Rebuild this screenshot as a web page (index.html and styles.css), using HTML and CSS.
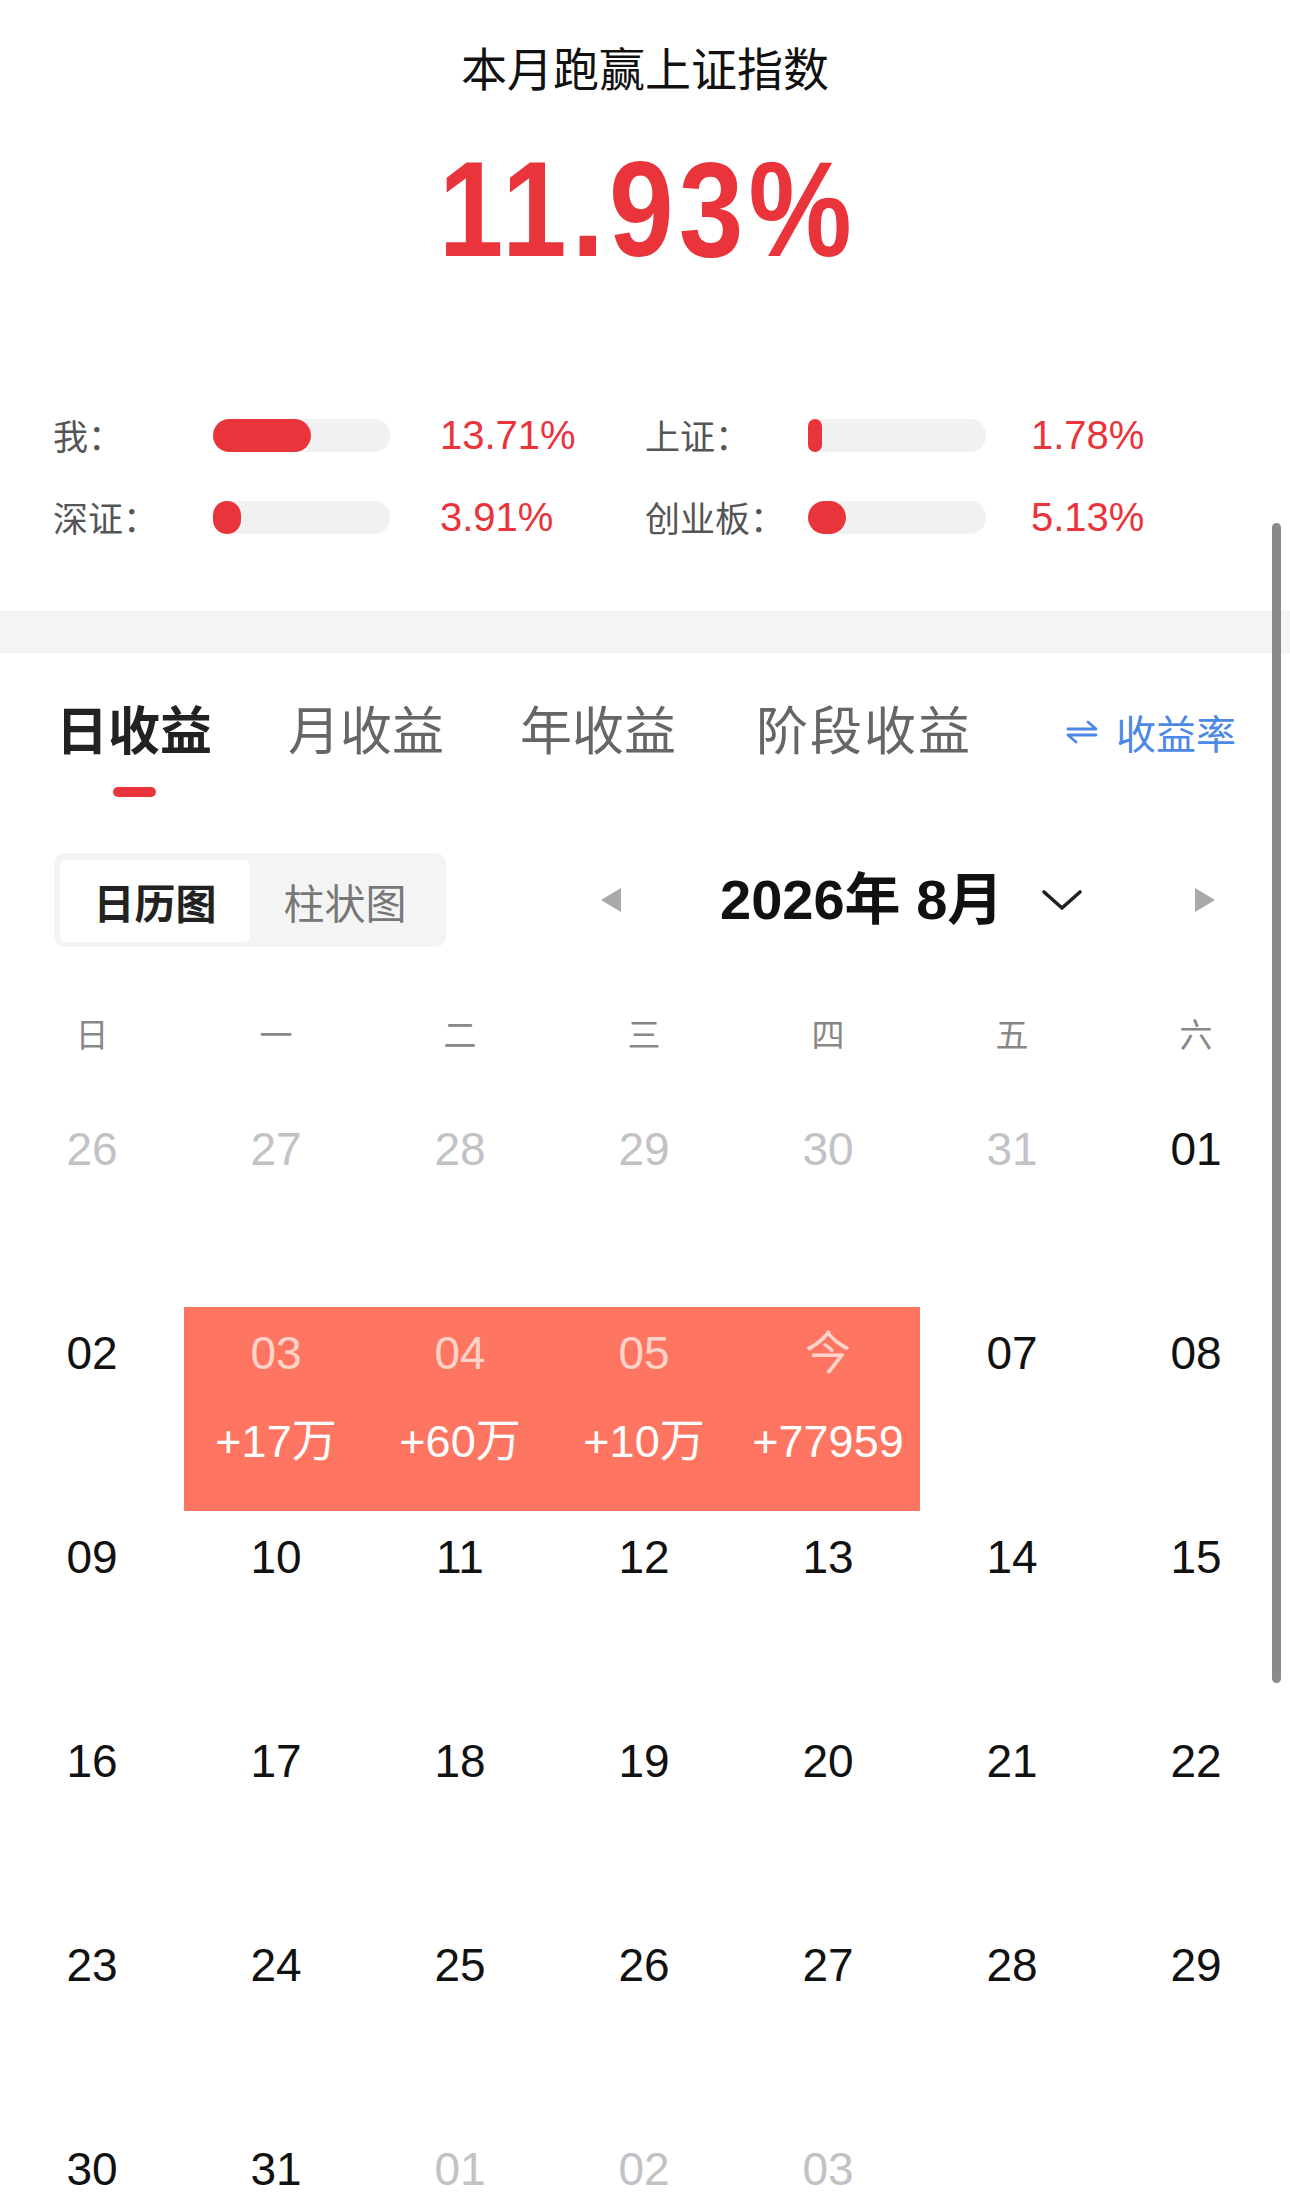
FILE: index.html
```html
<!DOCTYPE html>
<html lang="zh-CN">
<head>
<meta charset="utf-8">
<title>收益日历</title>
<link rel="stylesheet" href="styles.css">
</head>
<body>
<div class="page">
  <section class="summary">
    <h1 class="title">本月跑赢上证指数</h1>
    <div class="big"><span class="big-num">11.93%</span></div>
    <div class="stats">
      <div class="stat-row">
        <span class="label">我：</span>
        <span class="track"><span class="fill" style="width:98px"></span></span>
        <span class="val val-l">13.71%</span>
        <span class="label">上证：</span>
        <span class="track"><span class="fill" style="width:14px"></span></span>
        <span class="val val-r">1.78%</span>
      </div>
      <div class="stat-row">
        <span class="label">深证：</span>
        <span class="track"><span class="fill" style="width:28px"></span></span>
        <span class="val val-l">3.91%</span>
        <span class="label">创业板：</span>
        <span class="track"><span class="fill" style="width:38px"></span></span>
        <span class="val val-r">5.13%</span>
      </div>
    </div>
  </section>
  <div class="band"></div>
  <section class="panel">
    <div class="tabs">
      <div class="tab active"><span class="tab-text">日收益</span><span class="underline"></span></div>
      <div class="tab"><span class="tab-text">月收益</span></div>
      <div class="tab"><span class="tab-text">年收益</span></div>
      <div class="tab tab-wide"><span class="tab-text">阶段收益</span></div>
      <div class="rate">
        <svg class="swap" width="32" height="24" viewBox="0 0 32 24"><path d="M2 9 H30 L22 2" fill="none" stroke="#4c88e6" stroke-width="2.8" stroke-linejoin="round" stroke-linecap="round"/><path d="M30 15 H2 L10 22" fill="none" stroke="#4c88e6" stroke-width="2.8" stroke-linejoin="round" stroke-linecap="round"/></svg>
        <span>收益率</span>
      </div>
    </div>
    <div class="toolbar">
      <div class="seg">
        <span class="seg-item on">日历图</span>
        <span class="seg-item">柱状图</span>
      </div>
      <span class="tri tri-left"></span>
      <span class="month">2026年 8月</span>
      <svg class="chev" width="42" height="22" viewBox="0 0 42 22"><path d="M3 3 L21 19 L39 3" fill="none" stroke="#222" stroke-width="3.6" stroke-linecap="round" stroke-linejoin="round"/></svg>
      <span class="tri tri-right"></span>
    </div>
    <div class="weekdays">
      <span>日</span><span>一</span><span>二</span><span>三</span><span>四</span><span>五</span><span>六</span>
    </div>
    <div class="cal">
      <div class="cell"><span class="d faded">26</span></div>
      <div class="cell"><span class="d faded">27</span></div>
      <div class="cell"><span class="d faded">28</span></div>
      <div class="cell"><span class="d faded">29</span></div>
      <div class="cell"><span class="d faded">30</span></div>
      <div class="cell"><span class="d faded">31</span></div>
      <div class="cell"><span class="d">01</span></div>

      <div class="cell"><span class="d">02</span></div>
      <div class="cell hot"><span class="d">03</span><span class="amt">+17万</span></div>
      <div class="cell hot"><span class="d">04</span><span class="amt">+60万</span></div>
      <div class="cell hot"><span class="d">05</span><span class="amt">+10万</span></div>
      <div class="cell hot"><span class="d">今</span><span class="amt">+77959</span></div>
      <div class="cell"><span class="d">07</span></div>
      <div class="cell"><span class="d">08</span></div>

      <div class="cell"><span class="d">09</span></div>
      <div class="cell"><span class="d">10</span></div>
      <div class="cell"><span class="d">11</span></div>
      <div class="cell"><span class="d">12</span></div>
      <div class="cell"><span class="d">13</span></div>
      <div class="cell"><span class="d">14</span></div>
      <div class="cell"><span class="d">15</span></div>

      <div class="cell"><span class="d">16</span></div>
      <div class="cell"><span class="d">17</span></div>
      <div class="cell"><span class="d">18</span></div>
      <div class="cell"><span class="d">19</span></div>
      <div class="cell"><span class="d">20</span></div>
      <div class="cell"><span class="d">21</span></div>
      <div class="cell"><span class="d">22</span></div>

      <div class="cell"><span class="d">23</span></div>
      <div class="cell"><span class="d">24</span></div>
      <div class="cell"><span class="d">25</span></div>
      <div class="cell"><span class="d">26</span></div>
      <div class="cell"><span class="d">27</span></div>
      <div class="cell"><span class="d">28</span></div>
      <div class="cell"><span class="d">29</span></div>

      <div class="cell"><span class="d">30</span></div>
      <div class="cell"><span class="d">31</span></div>
      <div class="cell"><span class="d faded">01</span></div>
      <div class="cell"><span class="d faded">02</span></div>
      <div class="cell"><span class="d faded">03</span></div>
      <div class="cell"></div>
      <div class="cell"></div>
    </div>
  </section>
  <div class="scrollbar"></div>
</div>
</body>
</html>
```
FILE: styles.css
```css
* { box-sizing: border-box; }
html, body { margin: 0; padding: 0; }
body {
  width: 1290px;
  height: 2208px;
  overflow: hidden;
  background: #fff;
  font-family: "Liberation Sans", "Noto Sans CJK SC", sans-serif;
  color: #111;
}
.page { position: relative; width: 1290px; height: 2208px; overflow: hidden; }

.summary { padding-top: 43px; }
.title {
  margin: 0;
  font-family: "Noto Sans CJK SC", sans-serif;
  font-weight: 400;
  font-size: 46px;
  line-height: 46px;
  text-align: center;
  color: #111;
}
.big {
  margin-top: 53px;
  height: 135px;
  text-align: center;
}
.big-num {
  display: inline-block;
  font-size: 135px;
  line-height: 135px;
  font-weight: 700;
  letter-spacing: 6px;
  padding-left: 6px;
  color: #e9343c;
  transform: scaleX(0.86);
}
.stats { margin-top: 128px; padding-left: 53px; display: flex; flex-direction: column; gap: 22px; }
.stat-row {
  display: grid;
  grid-template-columns: 160px 177px 255px 163px 178px 1fr;
  align-items: center;
  height: 60px;
}
.label {
  font-family: "Noto Sans CJK SC", sans-serif;
  font-size: 35px;
  color: #555;
  line-height: 60px;
}
.track {
  display: block;
  height: 33px;
  border-radius: 16px;
  background: #f1f1f2;
}
.fill { display: block; height: 33px; border-radius: 999px; background: #e9343c; }
.val { font-size: 40px; color: #e9343c; line-height: 60px; }
.val-l { padding-left: 50px; }
.val-r { padding-left: 45px; }

.band { margin-top: 64px; height: 42px; background: #f3f4f6; }

.panel { padding-top: 45px; }
.tabs { display: flex; align-items: flex-start; padding-left: 56px; gap: 76px; }
.tab { display: flex; flex-direction: column; align-items: center; }
.tab-text {
  font-family: "Noto Sans CJK SC", sans-serif;
  font-size: 52px;
  line-height: 60px;
  color: #666;
  font-weight: 400;
}
.tab.active .tab-text { color: #222; font-weight: 700; }
.tab-wide { margin-left: 4px; }
.tab-wide .tab-text { letter-spacing: 2px; }
.underline { width: 43px; height: 10px; border-radius: 5px; background: #e9343c; margin-top: 29px; }
.rate {
  margin-left: auto;
  padding-right: 54px;
  display: flex;
  align-items: center;
  gap: 18px;
  height: 60px;
  margin-top: 4px;
  font-family: "Noto Sans CJK SC", sans-serif;
  font-size: 40px;
  color: #4c88e6;
}
.swap { display: block; }

.toolbar { margin-top: 56px; display: flex; align-items: center; padding-left: 54px; height: 94px; }
.seg {
  width: 392px;
  height: 94px;
  border-radius: 10px;
  background: #f4f4f5;
  padding: 7px 6px 5px 6px;
  display: flex;
}
.seg-item {
  width: 190px;
  display: flex;
  align-items: center;
  justify-content: center;
  font-family: "Noto Sans CJK SC", sans-serif;
  font-size: 41px;
  color: #777;
  border-radius: 6px;
}
.seg-item.on { background: #fff; color: #222; font-weight: 700; }
.tri { width: 0; height: 0; border-top: 12px solid transparent; border-bottom: 12px solid transparent; }
.tri-left { border-right: 20px solid #a9a9a9; margin-left: 155px; }
.tri-right { border-left: 20px solid #a9a9a9; margin-left: 112px; }
.month { margin-left: 99px; font-size: 56px; font-weight: 700; color: #111; line-height: 60px; }
.chev { margin-left: 38px; display: block; }

.weekdays {
  margin-top: 53px;
  display: grid;
  grid-template-columns: repeat(7, 184px);
  height: 66px;
  font-family: "Noto Sans CJK SC", sans-serif;
  font-size: 33px;
  line-height: 66px;
  color: #888;
  text-align: center;
}
.cal {
  margin-top: 37px;
  display: grid;
  grid-template-columns: repeat(7, 184px);
  grid-auto-rows: 204px;
}
.cell { display: flex; flex-direction: column; align-items: center; }
.d { height: 92px; line-height: 92px; font-size: 46px; color: #111; }
.d.faded { color: #c2c2c6; }
.cell.hot { background: #fe7662; }
.cell.hot .d { color: #ffd3ca; }
.amt { margin-top: 18px; line-height: 50px; font-size: 45px; color: #fff; }

.scrollbar {
  position: absolute;
  left: 1272px;
  top: 523px;
  width: 9px;
  height: 1160px;
  border-radius: 5px;
  background: #8a8a8a;
}
```
